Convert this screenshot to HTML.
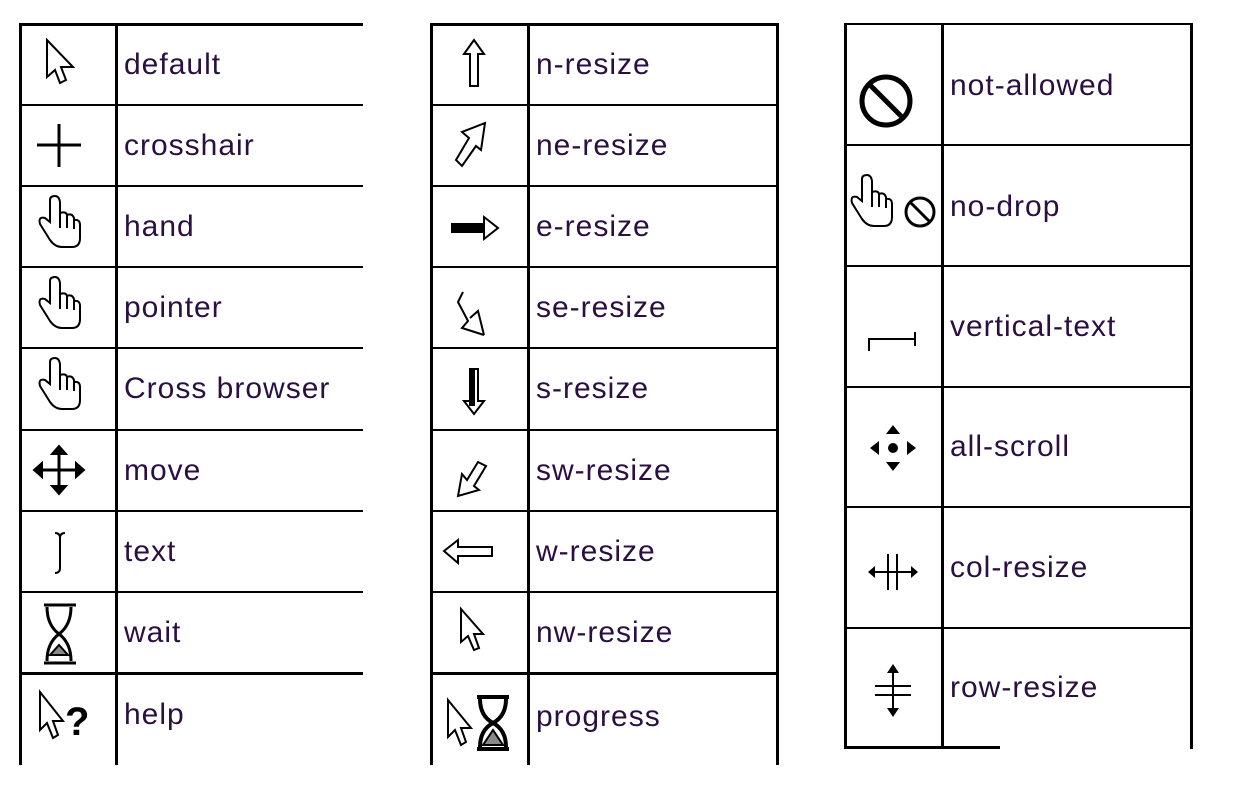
<!DOCTYPE html><html><head><style>
body{margin:0;width:1235px;height:799px;background:#fff;position:relative;overflow:hidden;font-family:"Liberation Sans",sans-serif}
.l{position:absolute;background:#000}
.t{position:absolute;font-size:30px;letter-spacing:1px;color:#2a0f40;line-height:30px}
svg{position:absolute;overflow:visible}
</style></head><body>
<!-- table 1 -->
<div class="l" style="left:19px;top:23px;width:3px;height:742px"></div>
<div class="l" style="left:115px;top:23px;width:3px;height:742px"></div>
<div class="l" style="left:19px;top:23px;width:344px;height:3px"></div>
<div class="l" style="left:19px;top:104px;width:344px;height:2px"></div>
<div class="l" style="left:19px;top:185px;width:344px;height:2px"></div>
<div class="l" style="left:19px;top:266px;width:344px;height:2px"></div>
<div class="l" style="left:19px;top:347px;width:344px;height:2px"></div>
<div class="l" style="left:19px;top:429px;width:344px;height:2px"></div>
<div class="l" style="left:19px;top:510px;width:344px;height:2px"></div>
<div class="l" style="left:19px;top:591px;width:344px;height:2px"></div>
<div class="l" style="left:19px;top:672px;width:344px;height:3px"></div>
<div class="t" style="left:124px;top:50px">default</div>
<div class="t" style="left:124px;top:131px">crosshair</div>
<div class="t" style="left:124px;top:212px">hand</div>
<div class="t" style="left:124px;top:293px">pointer</div>
<div class="t" style="left:124px;top:374px">Cross browser</div>
<div class="t" style="left:124px;top:456px">move</div>
<div class="t" style="left:124px;top:537px">text</div>
<div class="t" style="left:124px;top:618px">wait</div>
<div class="t" style="left:124px;top:700px">help</div>
<svg style="left:0;top:0" width="1" height="1" fill="none" stroke="#000" stroke-width="2">
<path d="M47 40 L47 77 L55 70 L60 83 L66 80 L61 67 L73 67 Z" fill="#fff"/>
<path d="M37 145 H81 M59 124 V167" stroke-width="3"/>
<g id="hand"><path d="M50 200 V222 L45 218 Q38 216 40 224 L50 240 Q55 247 62 247 H72 Q80 247 80 238 V225 Q80 219 74 220 V218 Q72 213 67 215 Q66 211 60 213 V202 Q59 196 55 196 Q50 196 50 200 Z" fill="#fff"/><path d="M60 213V228 M67 215V228 M74 220V229"/></g>
<use href="#hand" y="81"/><use href="#hand" y="162"/>
<path d="M37 470 H81 M59 449 V491" stroke-width="3"/>
<path d="M34 470 l8-7 v14 z M84 470 l-8-7 v14 z M59 446 l-7 8 h14 z M59 494 l-7-8 h14 z" fill="#000"/>
<path d="M55 533 Q60 533 60 538 V568 Q60 573 55 573 M65 533 Q60 533 60 538" />
<path d="M44 605 H76 M44 663 H76 M47 607 Q47 625 59 634 Q71 625 71 607 M47 661 Q47 643 59 634 Q71 643 71 661" stroke-width="3"/>
<path d="M50 655 L59 645 L68 655 Z" fill="#888"/>
<path d="M40 692 L40 730 L47 723 L53 738 L58 735 L53 721 L63 721 Z" fill="#fff"/>
<text x="65" y="735" font-family="Liberation Sans" font-weight="bold" font-size="40" fill="#000" stroke="none">?</text>
</svg>
<!-- table 2 -->
<div class="l" style="left:430px;top:23px;width:3px;height:742px"></div>
<div class="l" style="left:527px;top:23px;width:3px;height:742px"></div>
<div class="l" style="left:776px;top:23px;width:3px;height:742px"></div>
<div class="l" style="left:430px;top:23px;width:349px;height:3px"></div>
<div class="l" style="left:430px;top:104px;width:349px;height:2px"></div>
<div class="l" style="left:430px;top:185px;width:349px;height:2px"></div>
<div class="l" style="left:430px;top:266px;width:349px;height:2px"></div>
<div class="l" style="left:430px;top:347px;width:349px;height:2px"></div>
<div class="l" style="left:430px;top:429px;width:349px;height:2px"></div>
<div class="l" style="left:430px;top:510px;width:349px;height:2px"></div>
<div class="l" style="left:430px;top:591px;width:349px;height:2px"></div>
<div class="l" style="left:430px;top:672px;width:349px;height:3px"></div>
<div class="t" style="left:536px;top:50px">n-resize</div>
<div class="t" style="left:536px;top:131px">ne-resize</div>
<div class="t" style="left:536px;top:212px">e-resize</div>
<div class="t" style="left:536px;top:293px">se-resize</div>
<div class="t" style="left:536px;top:374px">s-resize</div>
<div class="t" style="left:536px;top:456px">sw-resize</div>
<div class="t" style="left:536px;top:537px">w-resize</div>
<div class="t" style="left:536px;top:618px">nw-resize</div>
<div class="t" style="left:536px;top:702px">progress</div>
<svg style="left:0;top:0" width="1" height="1" fill="none" stroke="#000" stroke-width="2">
<path d="M474 40 L464 54 H470 V86 H478 V54 H484 Z"/>
<path d="M485 123 L462 132 L469 138 L456 160 L462 166 L476 146 L481 150 Z"/>
<path d="M452 224 H484 V217 L498 228 L484 239 V232 H452 Z" fill="#fff"/><path d="M452 225 H484 V231 H452 Z" fill="#000"/>
<path d="M484 335 L462 328 L468 321 L458 302 L463 292 M484 335 L478 311 L470 318"/>
<path d="M470 369 H478 V401 H484 L474 414 L464 401 H470 Z" fill="#fff"/><path d="M470 369 H474 V405 H470Z" fill="#000"/>
<path d="M458 496 L462 474 L467 480 L478 462 L486 466 L474 486 L479 490 Z"/>
<path d="M444 551 L458 540 V547 H492 V556 H458 V563 Z"/>
<path d="M461 609 L461 642 L468 636 L474 650 L479 648 L474 634 L483 634 Z" fill="#fff"/>
<path d="M448 700 L448 737 L455 730 L461 745 L466 742 L461 728 L471 728 Z" fill="#fff"/>
<path d="M477 697 H509 M477 749 H509 M480 699 Q480 716 493 723 Q506 716 506 699 M480 747 Q480 730 493 723 Q506 730 506 747" stroke-width="4"/>
<path d="M483 745 L493 730 L503 745 Z" fill="#888"/>
</svg>
<!-- table 3 -->
<div class="l" style="left:844px;top:23px;width:3px;height:726px"></div>
<div class="l" style="left:941px;top:23px;width:3px;height:726px"></div>
<div class="l" style="left:1190px;top:23px;width:3px;height:726px"></div>
<div class="l" style="left:844px;top:23px;width:349px;height:2px"></div>
<div class="l" style="left:844px;top:144px;width:349px;height:2px"></div>
<div class="l" style="left:844px;top:265px;width:349px;height:2px"></div>
<div class="l" style="left:844px;top:386px;width:349px;height:2px"></div>
<div class="l" style="left:844px;top:506px;width:349px;height:2px"></div>
<div class="l" style="left:844px;top:627px;width:349px;height:2px"></div>
<div class="l" style="left:844px;top:746px;width:156px;height:3px"></div>
<div class="t" style="left:950px;top:71px">not-allowed</div>
<div class="t" style="left:950px;top:192px">no-drop</div>
<div class="t" style="left:950px;top:312px">vertical-text</div>
<div class="t" style="left:950px;top:432px">all-scroll</div>
<div class="t" style="left:950px;top:553px">col-resize</div>
<div class="t" style="left:950px;top:673px">row-resize</div>
<svg style="left:0;top:0" width="1" height="1" fill="none" stroke="#000" stroke-width="5">
<circle cx="886" cy="101" r="24"/><path d="M870 85 L902 117"/>
<circle cx="920" cy="212" r="14" stroke-width="3"/><path d="M911 203 L929 221" stroke-width="3"/>
<g stroke-width="2"><use href="#hand" x="812" y="-21"/></g>
<path d="M869 351 V339 H915 M915 332 V346" stroke-width="2"/>
<circle cx="893" cy="448" r="5" fill="#000" stroke="none"/>
<path d="M893 425 l-7 9 h14 z M893 471 l-7-9 h14 z M870 448 l9-7 v14 z M916 448 l-9-7 v14 z" fill="#000" stroke="none"/>
<path d="M888 554 V590 M897 554 V590 M870 572 H916" stroke-width="2"/>
<path d="M868 572 l7-6 v12z M918 572 l-7-6 v12z" fill="#000" stroke="none"/>
<path d="M875 686 H911 M875 695 H911 M893 668 V713" stroke-width="2"/>
<path d="M893 664 l-6 9 h12z M893 717 l-6-9 h12z" fill="#000" stroke="none"/>
</svg>
</body></html>
